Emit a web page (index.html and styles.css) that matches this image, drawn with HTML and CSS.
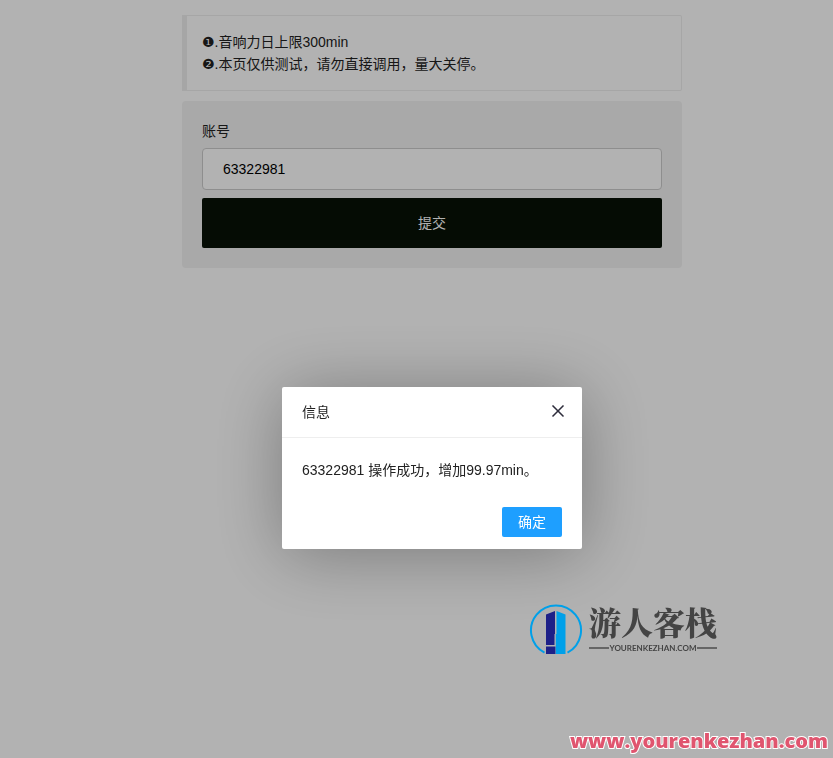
FILE: index.html
```html
<!DOCTYPE html>
<html lang="zh-CN">
<head>
<meta charset="utf-8">
<meta name="viewport" content="width=device-width, initial-scale=1">
<title>账号</title>
<link rel="stylesheet" href="styles.css">
</head>
<body>
<main class="page">
  <blockquote class="notice">❶.音响力日上限300min<br>❷.本页仅供测试，请勿直接调用，量大关停。</blockquote>
  <form class="panel">
    <label class="label" for="account">账号</label>
    <input class="input" id="account" type="text" value="63322981">
    <button class="submit" type="button">提交</button>
  </form>
</main>
<div class="shade">
  <section class="dialog" role="dialog" aria-labelledby="dialog-title">
    <header class="dialog-head">
      <h2 class="dialog-title" id="dialog-title">信息</h2>
      <button class="close" type="button" aria-label="关闭">
        <svg viewBox="0 0 14 14" width="14" height="14"><path d="M1.500 .500 12.500 11.500M12.500 .500 1.500 11.500" fill="none" stroke="#2e2d3c" stroke-width="1.500"/></svg>
      </button>
    </header>
    <p class="dialog-body">63322981 操作成功，增加99.97min。</p>
    <footer class="dialog-foot"><button class="confirm" type="button">确定</button></footer>
  </section>
</div>
<div class="brand">
  <svg class="brand-mark" viewBox="0 0 54 54" width="54" height="54">
    <path d="M15.500 49.600A25 25 0 1 1 38.500 49.600" fill="none" stroke="#00a0e9" stroke-width="2"/>
    <path d="M17 11.500 26 8V31H25.500V42H17Z" fill="#1d2088"/>
    <path d="M17 43.500H26.500V51H17Z" fill="#1d2088"/>
    <path d="M27.500 8 36.500 11.500V51H26.800V31H27.500Z" fill="#00a0e9"/>
  </svg>
  <div class="brand-text">
    <span class="brand-name">游人客栈</span>
    <span class="brand-site">YOURENKEZHAN.COM</span>
  </div>
</div>
<a class="site-link" href="#">www.yourenkezhan.com</a>
</body>
</html>
```
FILE: styles.css
```css
* {
  box-sizing: border-box;
}

body {
  margin: 0;
  background: #fff;
  color: #222;
  font: 14px/22px "Liberation Sans", "DejaVu Sans", "Noto Sans CJK SC", sans-serif;
}

button,
input {
  font: inherit;
}

.page {
  max-width: 531px;
  margin: 0 auto;
  padding: 15px 0 15px 31px;
}

.notice {
  margin: 0 0 10px;
  padding: 15px;
  border: 1px solid #eee;
  border-left: 5px solid #eee;
  border-radius: 0 2px 2px 0;
}

.panel {
  padding: 20px;
  border-radius: 4px;
  background: #f2f2f2;
}

.label {
  display: block;
  margin-bottom: 7px;
  line-height: 20px;
}

.input {
  display: block;
  width: 100%;
  height: 42px;
  margin-bottom: 8px;
  padding: 0 20px;
  border: 1px solid #ccc;
  border-radius: 4px;
  background: #fff;
  color: #000;
}

.submit {
  display: block;
  width: 100%;
  height: 50px;
  border: 0;
  border-radius: 2px;
  background: #081206;
  color: #fff;
}

.shade {
  position: fixed;
  inset: 0;
  padding: 387px 0 0 31px;
  background: rgba(0, 0, 0, 0.3);
}

.dialog {
  width: 300px;
  margin: 0 auto;
  border-radius: 2px;
  background: #fff;
  box-shadow: 1px 5px 70px rgba(0, 0, 0, 0.32);
}

.dialog-head {
  display: flex;
  align-items: center;
  justify-content: space-between;
  height: 51px;
  padding: 0 17px 0 20px;
  border-bottom: 1px solid #eee;
}

.dialog-title {
  margin: 0;
  font-size: 14px;
  font-weight: 400;
}

.close {
  display: flex;
  padding: 0;
  border: 0;
  background: none;
}

.dialog-body {
  margin: 0;
  padding: 20px;
  line-height: 24px;
}

.dialog-foot {
  display: flex;
  justify-content: flex-end;
  padding: 5px 20px 12px;
}

.confirm {
  height: 30px;
  padding: 0 16px;
  border: 0;
  border-radius: 2px;
  background: #1e9fff;
  color: #fff;
}

.brand {
  position: fixed;
  right: 116px;
  bottom: 101px;
  display: flex;
  gap: 6px;
}

.brand-text {
  display: flex;
  flex-direction: column;
  gap: 4px;
  color: #444;
}

.brand-name {
  font: 900 32px/36px "Noto Serif CJK SC", "Noto Sans CJK SC", serif;
}

.brand-site {
  display: flex;
  align-items: center;
  gap: 1px;
  font: 700 8px/10px Lato, sans-serif;
}

.brand-site::before,
.brand-site::after {
  content: "";
  flex: 1;
  height: 2px;
  background: #666;
}

.site-link {
  position: fixed;
  right: 5px;
  bottom: 4px;
  color: #e0556f;
  font: 800 20px/26px "Open Sans", "Noto Sans", sans-serif;
  text-decoration: none;
  -webkit-text-stroke: 2px #fff;
  paint-order: stroke fill;
}
```
